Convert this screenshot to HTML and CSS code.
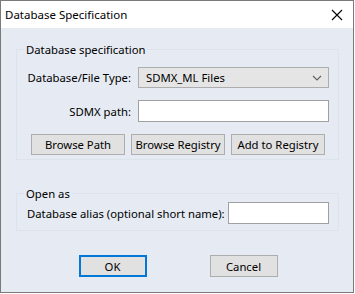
FILE: index.html
```html
<!DOCTYPE html>
<html lang="en">
<head>
    <meta charset="UTF-8">
    <meta name="viewport" content="width=device-width, initial-scale=1.0">
    <title>Database Specification</title>
    <link rel="stylesheet" href="styles.css">
</head>
<body>
    <div class="window">
        <div class="titlebar">
            <span class="title">Database Specification</span>
            <svg class="close" width="12" height="12" viewBox="0 0 12 12">
                <path d="M1 1 L11 11 M11 1 L1 11" stroke="#000" stroke-width="1.1" fill="none"/>
            </svg>
        </div>
        <div class="content">
            <fieldset class="group spec">
                <legend>Database specification</legend>
                <div class="row">
                    <label class="lbl" for="dbType">Database/File Type:</label>
                    <div class="combo" id="dbType">
                        <span>SDMX_ML Files</span>
                        <svg width="10" height="6" viewBox="0 0 10 6">
                            <path d="M1 1 L5 5 L9 1" stroke="#606060" stroke-width="1.1" fill="none"/>
                        </svg>
                    </div>
                </div>
                <div class="row">
                    <label class="lbl" for="sdmxPath">SDMX path:</label>
                    <input type="text" id="sdmxPath" class="field path">
                </div>
                <div class="buttons">
                    <button class="btn wide">Browse Path</button>
                    <button class="btn wide">Browse Registry</button>
                    <button class="btn wide">Add to Registry</button>
                </div>
            </fieldset>
            <fieldset class="group open">
                <legend>Open as</legend>
                <div class="alias-row">
                    <label for="alias">Database alias (optional short name):</label>
                    <input type="text" id="alias" class="field alias">
                </div>
            </fieldset>
            <div class="actions">
                <button class="btn small default">OK</button>
                <button class="btn small">Cancel</button>
            </div>
        </div>
    </div>
</body>
</html>
```

FILE: styles.css
```css
body {
    margin: 0;
    padding: 0;
    background: #fff;
    font-family: "Noto Sans", "Open Sans", sans-serif;
    font-size: 11.3px;
    color: #000;
}
.window {
    width: 354px;
    height: 293px;
    box-sizing: border-box;
    border: 1px solid #7a7a7a;
    background: #e6ebf3;
}
.titlebar {
    height: 27px;
    background: #fff;
    display: flex;
    align-items: center;
    justify-content: space-between;
    padding: 0 10px 0 4px;
}
.title {
    font-size: 11.5px;
}
.content {
    padding: 14px 14px 0 15px;
}
.group {
    margin: 0;
    border: 1px solid #dde3ea;
    padding: 0 9px 0 10px;
}
.group legend {
    padding: 0 2px;
    margin-left: -3px;
}
.spec {
    height: 118px;
    box-sizing: border-box;
    padding-top: 10px;
}
.row {
    display: grid;
    grid-template-columns: 104px 1fr;
    column-gap: 7px;
    align-items: center;
    margin-bottom: 12px;
}
.lbl {
    text-align: right;
    white-space: nowrap;
}
.combo {
    height: 21px;
    box-sizing: border-box;
    border: 1px solid #adadad;
    background: #e5e5e5;
    display: flex;
    align-items: center;
    justify-content: space-between;
    padding: 0 6px 0 7px;
}
.field {
    height: 22px;
    box-sizing: border-box;
    border: 1px solid #a0a0a0;
    background: #fff;
    margin: 0;
    font: inherit;
}
.buttons {
    display: flex;
    justify-content: center;
    gap: 6px;
    margin-top: 2px;
}
.btn {
    font: inherit;
    color: #000;
    background: #e1e1e1;
    border: 1px solid #adadad;
    padding: 0;
    margin: 0;
}
.wide {
    width: 94px;
    height: 21px;
}
.open {
    margin-top: 26px;
    height: 45px;
    box-sizing: border-box;
}
.alias-row {
    display: flex;
    align-items: center;
    justify-content: space-between;
    padding-top: 1px;
    white-space: nowrap;
}
.alias {
    width: 101px;
}
.actions {
    display: flex;
    justify-content: center;
    gap: 63px;
    margin-top: 24px;
    padding-left: 1px;
}
.small {
    width: 68px;
    height: 22px;
}
.default {
    border: 2px solid #0078d7;
}
```
